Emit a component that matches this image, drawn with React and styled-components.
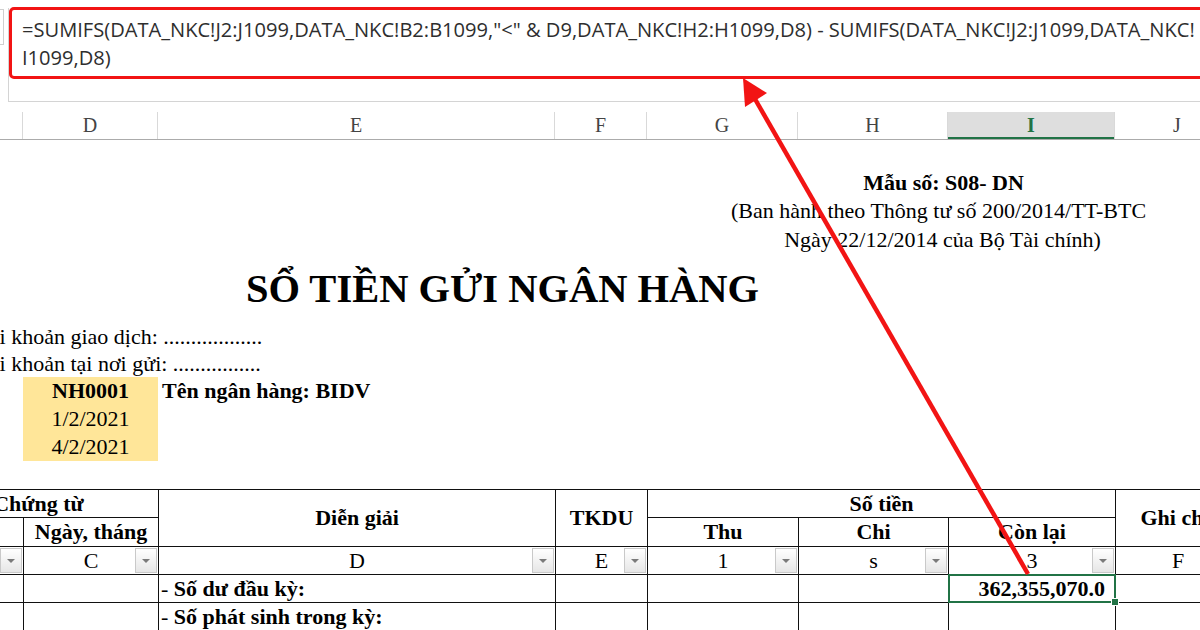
import React from 'react';
import styled, { createGlobalStyle } from 'styled-components';

const COLS = [105, 135, 397, 92, 151, 150, 167, 125];
const GRID = COLS.map((w) => `${w}px`).join(' ');
const SERIF = `"Liberation Serif", "Times New Roman", serif`;
const GREEN = '#217346';
const RED = '#f21414';

const GlobalStyle = createGlobalStyle`
  html, body { margin: 0; padding: 0; background: #fff; }
  body { overflow: hidden; }
`;

const Page = styled.div`
  position: relative;
  width: 1200px;
  height: 630px;
  overflow: hidden;
  background: #fff;
  font-family: ${SERIF};
  color: #000;
`;

/* ---------- formula bar ---------- */
const FormulaArea = styled.div`
  display: flex;
  align-items: flex-start;
  height: 102px;
  box-sizing: border-box;
  padding-top: 8px;
`;

const NameBoxEdge = styled.div`
  flex: none;
  width: 3px;
  height: 34px;
  margin-top: 1px;
  border: 1px solid #cfcfcf;
  border-left: none;
`;

const FormulaBox = styled.div`
  position: relative;
  flex: 1;
  margin-left: 4px;
  height: 94px;
  box-sizing: border-box;
  border-left: 1px solid #d4d4d4;
  border-bottom: 1px solid #d4d4d4;
  padding: 8px 0 0 13px;
  font-family: "Open Sans", "Noto Sans", sans-serif;
  font-size: 20.1px;
  line-height: 28px;
  color: #2e2e2e;
`;

const FormulaLine = styled.div`
  white-space: nowrap;
`;

const RedFrame = styled.div`
  position: absolute;
  left: 0;
  top: -1px;
  right: -30px;
  height: 72px;
  box-sizing: border-box;
  border: 3px solid ${RED};
  border-radius: 5px;
  pointer-events: none;
`;

/* ---------- column headers ---------- */
const ColumnHeaders = styled.div`
  display: grid;
  grid-template-columns: ${GRID};
  margin: 10px 0 0 -82px;
  height: 28px;
  box-sizing: border-box;
  border-bottom: 1px solid #ababab;
`;

const ColHead = styled.div`
  text-align: center;
  font-size: 20px;
  line-height: 27px;
  color: ${(p) => (p.$active ? GREEN : '#444')};
  font-weight: ${(p) => (p.$active ? 'bold' : 'normal')};
  background: ${(p) => (p.$active ? '#dedede' : 'transparent')};
  border-right: 1px solid #d9d9d9;
  box-shadow: ${(p) => (p.$active ? `inset 0 -2px 0 ${GREEN}` : 'none')};
`;

/* ---------- sheet body ---------- */
const Sheet = styled.div`
  display: grid;
  grid-template-columns: ${GRID};
  grid-template-rows: 29px 28px 29px 28px 69px 27px 27px 28px 28px 28px 28px;
  margin-left: -82px;
  font-size: 22px;
`;

const FormNote = styled.div`
  grid-column: 5 / 9;
  grid-row: ${(p) => p.$row};
  padding-right: ${(p) => p.$shift || 0}px;
  text-align: center;
  line-height: 28px;
  font-weight: ${(p) => (p.$bold ? 'bold' : 'normal')};
  white-space: nowrap;
`;

const Title = styled.h1`
  grid-column: 1 / 8;
  grid-row: 5;
  margin: 0;
  padding-right: 28px;
  text-align: center;
  font-size: 40.5px;
  line-height: 69px;
  font-weight: bold;
  white-space: nowrap;
`;

const InfoLine = styled.div`
  grid-column: 1 / 4;
  grid-row: ${(p) => p.$row};
  padding-left: 37px;
  line-height: 27px;
  white-space: nowrap;
`;

const CodeCell = styled.div`
  grid-column: 2;
  grid-row: ${(p) => p.$row};
  background: #ffe699;
  text-align: center;
  line-height: 28px;
  font-weight: ${(p) => (p.$bold ? 'bold' : 'normal')};
`;

const BankName = styled.div`
  grid-column: 3;
  grid-row: 8;
  padding-left: 4px;
  line-height: 28px;
  font-weight: bold;
  white-space: nowrap;
`;

/* ---------- ledger table ---------- */
const Ledger = styled.table`
  margin-left: -82px;
  width: 1322px;
  border-collapse: collapse;
  table-layout: fixed;
  font-size: 22px;
`;

const Row = styled.tr`
  height: ${(p) => p.$h}px;
`;

const HeadCell = styled.th`
  border: 1px solid #111;
  padding: 0;
  line-height: 22px;
  text-align: center;
  vertical-align: middle;
  font-weight: bold;
  white-space: nowrap;
  overflow: hidden;
`;

const FilterCell = styled.td`
  position: relative;
  border: 1px solid #111;
  padding: 0;
  line-height: 22px;
  text-align: center;
  font-weight: normal;
`;

const FilterButton = styled.span`
  position: absolute;
  right: 1px;
  top: 1px;
  bottom: 1px;
  width: 22px;
  box-sizing: border-box;
  border: 1px solid #c9c9c9;
  background: linear-gradient(#ffffff, #e6e6e6);
  display: flex;
  align-items: center;
  justify-content: center;
  &::after {
    content: '';
    border-left: 4px solid transparent;
    border-right: 4px solid transparent;
    border-top: 4px solid #7a7a7a;
  }
`;

const DataCell = styled.td`
  position: relative;
  border: 1px solid #111;
  padding: ${(p) => (p.$align === 'right' ? '0 10px 0 0' : '0 0 0 2px')};
  line-height: 22px;
  text-align: ${(p) => p.$align || 'left'};
  font-weight: bold;
  white-space: nowrap;
  ${(p) =>
    p.$selected &&
    `
    &::before {
      content: '';
      position: absolute;
      inset: -1px;
      border: 2px solid ${GREEN};
    }
    &::after {
      content: '';
      position: absolute;
      right: -4px;
      bottom: -4px;
      width: 6px;
      height: 6px;
      background: ${GREEN};
      border: 1px solid #fff;
    }
  `}
`;

const Plain = styled.span`
  font-weight: normal;
`;

/* ---------- annotation ---------- */
const ArrowLayer = styled.svg`
  position: absolute;
  left: 0;
  top: 0;
  pointer-events: none;
`;

const headers = ['C', 'D', 'E', 'F', 'G', 'H', 'I', 'J'];
const filters = ['B', 'C', 'D', 'E', '1', 's', '3', 'F'];

export default function App() {
  return (
    <>
      <GlobalStyle />
      <Page>
        <FormulaArea>
          <NameBoxEdge />
          <FormulaBox>
            <FormulaLine>
              =SUMIFS(DATA_NKC!J2:J1099,DATA_NKC!B2:B1099,"&lt;" &amp; D9,DATA_NKC!H2:H1099,D8) - SUMIFS(DATA_NKC!J2:J1099,DATA_NKC!
            </FormulaLine>
            <FormulaLine>I1099,D8)</FormulaLine>
            <RedFrame />
          </FormulaBox>
        </FormulaArea>

        <ColumnHeaders>
          {headers.map((h) => (
            <ColHead key={h} $active={h === 'I'}>
              {h}
            </ColHead>
          ))}
        </ColumnHeaders>

        <Sheet>
          <FormNote $row={2} $bold>
            Mẫu số: S08- DN
          </FormNote>
          <FormNote $row={3} $shift={10}>
            (Ban hành theo Thông tư số 200/2014/TT-BTC
          </FormNote>
          <FormNote $row={4} $shift={2}>
            Ngày 22/12/2014 của Bộ Tài chính)
          </FormNote>
          <Title>SỔ TIỀN GỬI NGÂN HÀNG</Title>
          <InfoLine $row={6}>Số tài khoản giao dịch: ..................</InfoLine>
          <InfoLine $row={7}>Số tài khoản tại nơi gửi: ................</InfoLine>
          <CodeCell $row={8} $bold>
            NH0001
          </CodeCell>
          <CodeCell $row={9}>1/2/2021</CodeCell>
          <CodeCell $row={10}>4/2/2021</CodeCell>
          <BankName>Tên ngân hàng: BIDV</BankName>
        </Sheet>

        <Ledger>
          <colgroup>
            {COLS.map((w, i) => (
              <col key={i} style={{ width: w }} />
            ))}
          </colgroup>
          <thead>
            <Row $h={28}>
              <HeadCell colSpan={2}>Chứng từ</HeadCell>
              <HeadCell rowSpan={2}>Diễn giải</HeadCell>
              <HeadCell rowSpan={2}>TKDU</HeadCell>
              <HeadCell colSpan={3}>Số tiền</HeadCell>
              <HeadCell rowSpan={2}>Ghi chú</HeadCell>
            </Row>
            <Row $h={29}>
              <HeadCell>Số</HeadCell>
              <HeadCell>Ngày, tháng</HeadCell>
              <HeadCell>Thu</HeadCell>
              <HeadCell>Chi</HeadCell>
              <HeadCell>Còn lại</HeadCell>
            </Row>
          </thead>
          <tbody>
            <Row $h={28}>
              {filters.map((f, i) => (
                <FilterCell key={i}>
                  {f}
                  <FilterButton />
                </FilterCell>
              ))}
            </Row>
            <Row $h={28}>
              <DataCell />
              <DataCell />
              <DataCell>
                <Plain>- </Plain>Số dư đầu kỳ:
              </DataCell>
              <DataCell />
              <DataCell />
              <DataCell />
              <DataCell $align="right" $selected>
                362,355,070.0
              </DataCell>
              <DataCell />
            </Row>
            <Row $h={28}>
              <DataCell />
              <DataCell />
              <DataCell>
                <Plain>- </Plain>Số phát sinh trong kỳ:
              </DataCell>
              <DataCell />
              <DataCell />
              <DataCell />
              <DataCell />
              <DataCell />
            </Row>
          </tbody>
        </Ledger>

        <ArrowLayer width="1200" height="630" viewBox="0 0 1200 630">
          <line x1="1028" y1="574" x2="755" y2="99" stroke={RED} strokeWidth="4.5" />
          <polygon points="743,78 767,93 745,107" fill={RED} />
        </ArrowLayer>
      </Page>
    </>
  );
}
